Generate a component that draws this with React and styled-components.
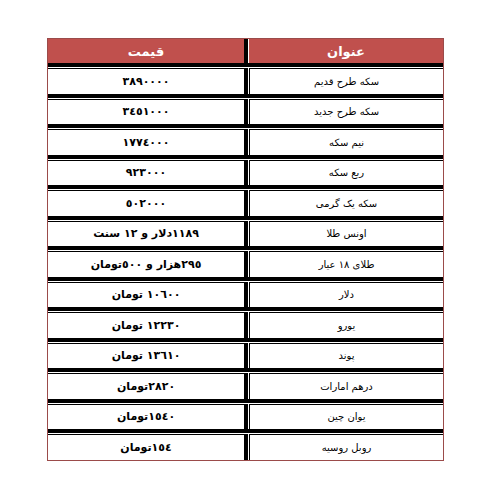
import React from "react";
import styled, { createGlobalStyle } from "styled-components";

const Global = createGlobalStyle`
  html, body { margin: 0; padding: 0; background: #fff; }
  body { font-family: "DejaVu Sans", "Liberation Sans", sans-serif; }
`;

const Page = styled.div`
  padding: 38px 0 0 47px;
`;

const Table = styled.div`
  width: 395px;
  border: 1px solid #9b4b4a;
  direction: rtl;
  background: #fff;
`;

const Row = styled.div`
  display: grid;
  grid-template-columns: 194px 200px;
  column-gap: 1px;
  border-top: ${(p) => (p.$head ? "0" : "4px solid #000")};
  padding-top: ${(p) => (p.$head ? "0" : "1px")};
`;

const Cell = styled.div`
  box-sizing: border-box;
  height: ${(p) => (p.$head ? "24px" : "25.5px")};
  display: flex;
  align-items: center;
  justify-content: center;
  background: ${(p) => (p.$head ? "#c0504d" : "#fff")};
  color: ${(p) => (p.$head ? "#fff" : "#000")};
  border-top: ${(p) => (p.$head ? "0" : "1px solid #000")};
  white-space: nowrap;
`;

const TitleCell = styled(Cell)`
  border-left: ${(p) => (p.$head ? "0" : "1px solid #000")};
  font-size: ${(p) => (p.$head ? "13px" : "10px")};
  font-weight: ${(p) => (p.$head ? 700 : 400)};
`;

const PriceCell = styled(Cell)`
  border-right: 4px solid #000;
  font-size: ${(p) => (p.$head ? "13px" : "11px")};
  font-weight: 700;
`;

const rows = [
  ["سکه طرح قدیم", "٣٨٩٠٠٠٠"],
  ["سکه طرح جدید", "٣٤٥١٠٠٠"],
  ["نیم سکه", "١٧٧٤٠٠٠"],
  ["ربع سکه", "٩٢٣٠٠٠"],
  ["سکه یک گرمی", "٥٠٢٠٠٠"],
  ["اونس طلا", "١١٨٩دلار و ١٢ سنت"],
  ["طلای ١٨ عیار", "٢٩٥هزار و ٥٠٠تومان"],
  ["دلار", "١٠٦٠٠ تومان"],
  ["یورو", "١٢٢٣٠ تومان"],
  ["پوند", "١٣٦١٠ تومان"],
  ["درهم امارات", "٢٨٢٠تومان"],
  ["یوان چین", "١٥٤٠تومان"],
  ["روبل روسیه", "١٥٤تومان"],
];

export default function App() {
  return (
    <>
      <Global />
      <Page>
        <Table>
          <Row $head>
            <TitleCell $head>عنوان</TitleCell>
            <PriceCell $head>قیمت</PriceCell>
          </Row>
          {rows.map(([t, p]) => (
            <Row key={t}>
              <TitleCell>{t}</TitleCell>
              <PriceCell>{p}</PriceCell>
            </Row>
          ))}
        </Table>
      </Page>
    </>
  );
}
